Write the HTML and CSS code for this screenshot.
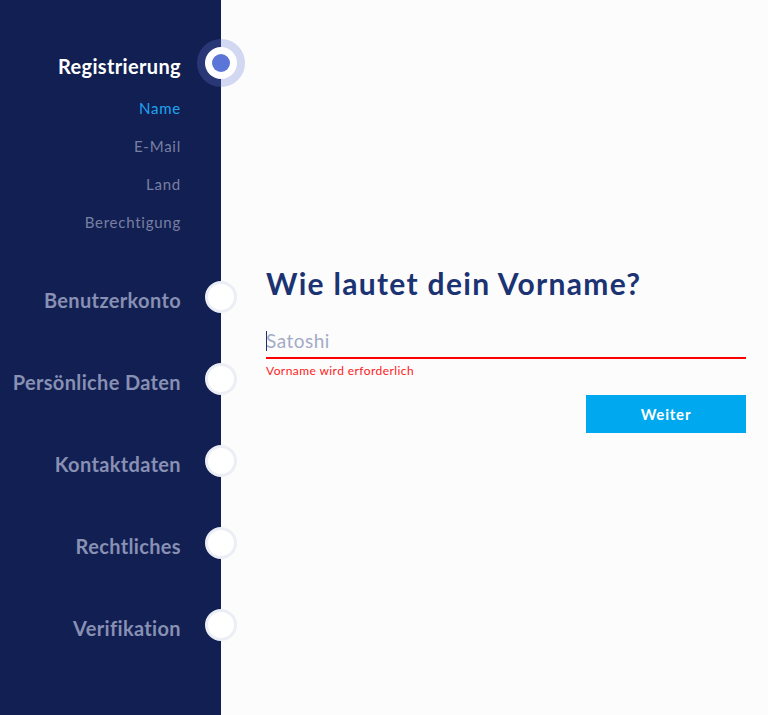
FILE: index.html
```html
<!DOCTYPE html>
<html lang="de">
<head>
<meta charset="utf-8">
<title>Registrierung</title>
<link rel="stylesheet" href="styles.css">
</head>
<body>
<aside class="sidebar">
  <div class="step step-active">
    <span class="step-label">Registrierung</span>
    <span class="marker"><span class="dot-active"></span></span>
  </div>
  <ul class="substeps">
    <li class="current">Name</li>
    <li>E-Mail</li>
    <li>Land</li>
    <li>Berechtigung</li>
  </ul>
  <div class="steps">
    <div class="step"><span class="step-label">Benutzerkonto</span><span class="marker"><span class="dot"></span></span></div>
    <div class="step"><span class="step-label">Persönliche Daten</span><span class="marker"><span class="dot"></span></span></div>
    <div class="step"><span class="step-label">Kontaktdaten</span><span class="marker"><span class="dot"></span></span></div>
    <div class="step"><span class="step-label">Rechtliches</span><span class="marker"><span class="dot"></span></span></div>
    <div class="step"><span class="step-label">Verifikation</span><span class="marker"><span class="dot"></span></span></div>
  </div>
</aside>
<main class="content">
  <form class="form" onsubmit="return false">
    <h1 class="title">Wie lautet dein Vorname?</h1>
    <div class="field-wrap">
      <input class="field" type="text" placeholder="Satoshi">
    </div>
    <p class="error">Vorname wird erforderlich</p>
    <div class="actions"><button class="btn" type="submit">Weiter</button></div>
  </form>
</main>
</body>
</html>
```

FILE: styles.css
```css
html, body {
  margin: 0;
  padding: 0;
}
body {
  display: flex;
  min-height: 100vh;
  font-family: Lato, "Open Sans", "Liberation Sans", sans-serif;
  background: #fcfcfd;
}
.sidebar {
  position: relative;
  z-index: 1;
  flex: 0 0 221px;
  width: 221px;
  min-height: 100vh;
  background: #121f52;
  box-sizing: border-box;
  padding-top: 39px;
  display: flex;
  flex-direction: column;
}
.step {
  display: flex;
  justify-content: flex-end;
  align-items: center;
  margin-right: -24px;
  height: 82px;
}
.step-active {
  height: 48px;
}
.step-label {
  margin-right: 16px;
  margin-top: 5px;
  font-size: 20px;
  line-height: 1.2;
  font-weight: 700;
  letter-spacing: 0.35px;
  color: #8890b3;
  white-space: nowrap;
}
.step-active .step-label {
  color: #ffffff;
}
.marker {
  flex: 0 0 48px;
  width: 48px;
  height: 48px;
  display: flex;
  align-items: center;
  justify-content: center;
}
.dot-active {
  width: 48px;
  height: 48px;
  border-radius: 50%;
  background: rgba(100, 120, 215, 0.28);
  display: flex;
  align-items: center;
  justify-content: center;
}
.dot-active::after {
  content: "";
  width: 18px;
  height: 18px;
  border-radius: 50%;
  background: #5b76d6;
  box-shadow: 0 0 0 7px #ffffff;
}
.dot {
  width: 32px;
  height: 32px;
  box-sizing: border-box;
  border-radius: 50%;
  background: #ffffff;
  border: 3px solid #eceef5;
}
.substeps {
  list-style: none;
  margin: 2px 0 0;
  padding: 0 40px 0 0;
  text-align: right;
}
.substeps li {
  font-size: 15px;
  line-height: 38px;
  letter-spacing: 0.75px;
  color: #787fa2;
}
.substeps li.current {
  color: #1ea4f1;
}
.steps {
  margin-top: 15px;
}
.content {
  flex: 1;
  padding: 265px 22px 0 45px;
  background: #fcfcfd;
}
.form {
  display: flex;
  flex-direction: column;
}
.title {
  margin: 0 0 28px;
  font-size: 30px;
  line-height: 1.2;
  font-weight: 700;
  letter-spacing: 1.3px;
  color: #1b3372;
}
.field-wrap {
  position: relative;
  display: flex;
  flex-direction: column;
}
.field-wrap::before {
  content: "";
  position: absolute;
  left: 0;
  top: 2px;
  width: 1px;
  height: 20px;
  background: #1b3372;
}
.field {
  font-family: inherit;
  font-size: 19px;
  line-height: 23px;
  letter-spacing: 0.5px;
  height: 30px;
  box-sizing: border-box;
  padding: 0 0 5px;
  border: 0;
  border-bottom: 2px solid #ff0000;
  background: transparent;
  outline: none;
  color: #1b3372;
  caret-color: transparent;
}
.field::placeholder {
  color: #a4abc6;
}
.error {
  margin: 5px 0 0;
  font-size: 12px;
  line-height: 14px;
  letter-spacing: 0.42px;
  color: #ff1a1a;
}
.actions {
  display: flex;
  justify-content: flex-end;
  margin-top: 17px;
}
.btn {
  width: 160px;
  height: 38px;
  border: 0;
  border-radius: 0;
  background: #00a8ef;
  color: #ffffff;
  font-family: inherit;
  font-size: 15px;
  font-weight: 700;
  letter-spacing: 0.8px;
  cursor: pointer;
}
```
